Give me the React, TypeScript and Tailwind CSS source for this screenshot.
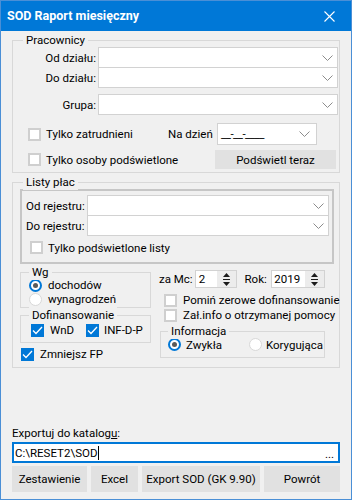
import React from "react"

const Chevron = () => (
    <svg width="11" height="6" viewBox="0 0 11 6">
        <path d="M0.5 0.5 L5.5 5.5 L10.5 0.5" fill="none" stroke="#8c8c8c" strokeWidth="1" />
    </svg>
)

const SpinArrows = () => (
    <svg width="9" height="15" viewBox="0 0 9 15">
        <path d="M4.5 1 L8 5 L1 5 Z" fill="#1a1a1a" />
        <rect x="1" y="7" width="7" height="1" fill="#1a1a1a" />
        <path d="M1 10 L8 10 L4.5 14 Z" fill="#1a1a1a" />
    </svg>
)

const Combo = ({ className = "" }: { className?: string }) => (
    <div className={`flex h-[21px] items-center justify-end border border-[#d2d2d2] bg-white pr-[4px] ${className}`}>
        <Chevron />
    </div>
)

const Box = ({ checked = false }: { checked?: boolean }) =>
    checked ? (
        <span className="flex h-[13px] w-[13px] shrink-0 items-center justify-center bg-[#0078d7]">
            <svg width="11" height="9" viewBox="0 0 11 9">
                <path d="M1 4.5 L4 7.5 L10 1" fill="none" stroke="white" strokeWidth="1.3" />
            </svg>
        </span>
    ) : (
        <span className="h-[13px] w-[13px] shrink-0 border-2 border-[#cfcfcf] bg-white" />
    )

const Radio = ({ on = false }: { on?: boolean }) =>
    on ? (
        <span className="flex h-[13px] w-[13px] shrink-0 items-center justify-center rounded-full border-2 border-[#0078d7] bg-white">
            <span className="h-[5px] w-[5px] rounded-full bg-[#5a5a5a]" />
        </span>
    ) : (
        <span className="h-[13px] w-[13px] shrink-0 rounded-full border border-[#d8d8d8] bg-white" />
    )

// legenda ramki - leży na górnej krawędzi
const Legend = ({ children, className }: { children: React.ReactNode; className: string }) => (
    <span className={`absolute -top-[9px] bg-[#f0f0f0] px-[3px] leading-[16px] ${className}`}>{children}</span>
)

export default function App() {
    return (
        <div className="flex h-[500px] w-[352px] flex-col whitespace-nowrap border border-[#4a8fd6] bg-[#f0f0f0] font-['Roboto',sans-serif] text-[11.5px] leading-[16px] text-black">
            {/* pasek tytułu */}
            <div className="flex h-[30px] shrink-0 items-center justify-between bg-[#0078d7] pl-[6px] pr-[16px] text-white">
                <span className="text-[12.5px] font-bold">SOD Raport miesięczny</span>
                <svg width="11" height="11" viewBox="0 0 11 11">
                    <path d="M0.5 0.5 L10.5 10.5 M10.5 0.5 L0.5 10.5" stroke="white" strokeWidth="1.1" />
                </svg>
            </div>

            <div className="flex flex-1 flex-col px-[11px]">
                {/* Pracownicy */}
                <div className="relative mt-[9px] h-[133px] border border-[#d8d8d8]">
                    <Legend className="left-[10px]">Pracownicy</Legend>
                    <div className="flex flex-col pt-[6px]">
                        <div className="flex items-center">
                            <span className="w-[83px] text-right">Od działu:</span>
                            <Combo className="ml-[2px] mr-[1px] flex-1" />
                        </div>
                        <div className="-mt-px flex items-center">
                            <span className="w-[83px] text-right">Do działu:</span>
                            <Combo className="ml-[2px] mr-[1px] flex-1" />
                        </div>
                        <div className="mt-[6px] flex items-center">
                            <span className="w-[83px] text-right">Grupa:</span>
                            <Combo className="ml-[2px] mr-[1px] flex-1" />
                        </div>
                        <div className="mt-[8px] flex h-[22px] items-center pl-[15px]">
                            <div className="flex w-[140px] items-center gap-[5px]">
                                <Box />
                                <span>Tylko zatrudnieni</span>
                            </div>
                            <span className="w-[49px]">Na dzień</span>
                            <div className="flex h-[22px] w-[100px] items-center justify-between border border-[#d2d2d2] bg-white pl-[3px] pr-[6px]">
                                <span className="tracking-[-0.5px]">__-__-____</span>
                                <Chevron />
                            </div>
                        </div>
                        <div className="mt-[5px] flex h-[19px] items-center pl-[15px]">
                            <div className="flex w-[187px] items-center gap-[5px]">
                                <Box />
                                <span>Tylko osoby podświetlone</span>
                            </div>
                            <button className="h-[19px] w-[121px] bg-[#e1e1e1]">Podświetl teraz</button>
                        </div>
                    </div>
                </div>

                {/* Listy płac */}
                <div className="relative mt-[9px] h-[186px] border border-[#d8d8d8]">
                    <Legend className="left-[10px]">Listy płac</Legend>
                    <div className="ml-[7px] mt-[6px] h-[75px] w-[314px] border-2 border-[#c6c6c6] pt-[4px]">
                        <div className="flex items-center pl-[4px]">
                            <span className="w-[61px]">Od rejestru:</span>
                            <Combo className="mr-[3px] flex-1" />
                        </div>
                        <div className="-mt-px flex items-center pl-[4px]">
                            <span className="w-[61px]">Do rejestru:</span>
                            <Combo className="mr-[3px] flex-1" />
                        </div>
                        <div className="mt-[5px] flex h-[13px] items-center gap-[5px] pl-[8px]">
                            <Box />
                            <span>Tylko podświetlone listy</span>
                        </div>
                    </div>

                    <div className="flex">
                        {/* lewa kolumna */}
                        <div className="ml-[7px] w-[131px]">
                            <div className="relative mt-[8px] h-[36px] border border-[#d8d8d8] pl-[8px] pt-[5px]">
                                <Legend className="left-[8px]">Wg</Legend>
                                <div className="flex h-[14px] items-center gap-[6px]">
                                    <Radio on />
                                    <span>dochodów</span>
                                </div>
                                <div className="flex h-[14px] items-center gap-[6px]">
                                    <Radio />
                                    <span>wynagrodzeń</span>
                                </div>
                            </div>
                            <div className="relative mt-[7px] h-[28px] border border-[#d8d8d8] pl-[10px] pt-[7px]">
                                <Legend className="left-[8px]">Dofinansowanie</Legend>
                                <div className="flex h-[14px] items-center">
                                    <div className="flex w-[55px] items-center gap-[6px]">
                                        <Box checked />
                                        <span>WnD</span>
                                    </div>
                                    <div className="flex items-center gap-[5px]">
                                        <Box checked />
                                        <span>INF-D-P</span>
                                    </div>
                                </div>
                            </div>
                            <div className="mt-[4px] flex h-[14px] items-center gap-[6px] pl-[1px]">
                                <Box checked />
                                <span>Zmniejsz FP</span>
                            </div>
                        </div>

                        {/* prawa kolumna */}
                        <div className="ml-[8px] w-[166px]">
                            <div className="mt-[6px] flex h-[18px] items-center">
                                <span className="w-[36px]">za Mc:</span>
                                <div className="flex h-[18px] w-[42px] items-center border border-[#d2d2d2] bg-white">
                                    <span className="flex-1 pl-[3px]">2</span>
                                    <span className="flex h-full w-[19px] items-center justify-center bg-[#ececec]">
                                        <SpinArrows />
                                    </span>
                                </div>
                                <span className="ml-[8px] w-[27px]">Rok:</span>
                                <div className="flex h-[18px] w-[54px] items-center border border-[#d2d2d2] bg-white">
                                    <span className="flex-1 pl-[2px]">2019</span>
                                    <span className="flex h-full w-[19px] items-center justify-center bg-[#ececec]">
                                        <SpinArrows />
                                    </span>
                                </div>
                            </div>
                            <div className="mt-[5px] flex h-[14px] items-center gap-[6px] pl-[5px]">
                                <Box />
                                <span>Pomiń zerowe dofinansowanie</span>
                            </div>
                            <div className="mt-[1px] flex h-[14px] items-center gap-[6px] pl-[5px]">
                                <Box />
                                <span>Zał.info o otrzymanej pomocy</span>
                            </div>
                            <div className="relative ml-[1px] mt-[9px] h-[27px] border border-[#d8d8d8] pl-[7px] pt-[6px]">
                                <Legend className="left-[7px]">Informacja</Legend>
                                <div className="flex h-[13px] items-center">
                                    <div className="flex w-[81px] items-center gap-[5px]">
                                        <Radio on />
                                        <span>Zwykła</span>
                                    </div>
                                    <div className="flex items-center gap-[4px]">
                                        <Radio />
                                        <span>Korygująca</span>
                                    </div>
                                </div>
                            </div>
                        </div>
                    </div>
                </div>

                {/* eksport */}
                <div className="mt-[57px]">
                    Exportuj do katalog<span className="underline">u</span>:
                </div>
                <div className="mt-px flex h-[21px] items-center justify-between border-2 border-[#0078d7] bg-white pl-[1px] pr-[4px]">
                    <span className="flex items-center">
                        C:\RESET2\SOD<span className="ml-px h-[14px] w-px bg-black" />
                    </span>
                    <span className="self-end leading-[14px]">...</span>
                </div>
                <div className="mt-[3px] flex gap-[4px]">
                    <button className="h-[26px] w-[75px] bg-[#e1e1e1]">Zestawienie</button>
                    <button className="h-[26px] w-[47px] bg-[#e1e1e1]">Excel</button>
                    <button className="h-[26px] w-[118px] bg-[#e1e1e1]">Export SOD (GK 9.90)</button>
                    <button className="h-[26px] w-[76px] bg-[#e1e1e1]">Powrót</button>
                </div>
            </div>
        </div>
    )
}
